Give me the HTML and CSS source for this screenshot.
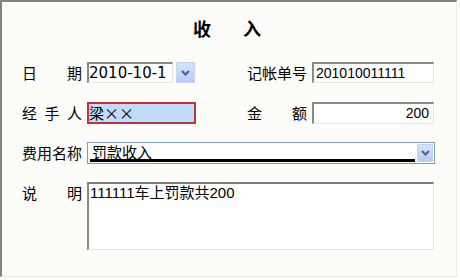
FILE: index.html
```html
<!DOCTYPE html>
<html lang="zh">
<head>
<meta charset="utf-8">
<title>收入</title>
<link rel="stylesheet" href="styles.css">
</head>
<body>
<div class="frame">
  <div class="title"><span>收</span><span>入</span></div>

  <div class="row row1">
    <div class="label"><span>日</span><span>期</span></div>
    <div class="field-left">
      <div class="box date">2010-10-1</div>
      <div class="dd-btn"><svg width="9" height="6" viewBox="0 0 9 6"><path d="M1 1 L4.5 4.5 L8 1" fill="none" stroke="#4a5f88" stroke-width="2"/></svg></div>
    </div>
    <div class="label right"><span>记</span><span>帐</span><span>单</span><span>号</span></div>
    <div class="box wide">201010011111</div>
  </div>

  <div class="row row2">
    <div class="label"><span>经</span><span>手</span><span>人</span></div>
    <div class="field-left">
      <div class="selected">梁××</div>
    </div>
    <div class="label right"><span>金</span><span>额</span></div>
    <div class="box wide num">200</div>
  </div>

  <div class="row row3">
    <div class="label"><span>费</span><span>用</span><span>名</span><span>称</span></div>
    <div class="combo">
      <div class="combo-text">罚款收入</div>
      <div class="dd-btn combo-btn"><svg width="9" height="6" viewBox="0 0 9 6"><path d="M1 1 L4.5 4.5 L8 1" fill="none" stroke="#4a5f88" stroke-width="2"/></svg></div>
    </div>
  </div>

  <div class="row row4">
    <div class="label"><span>说</span><span>明</span></div>
    <div class="memo">111111车上罚款共200</div>
  </div>
</div>
</body>
</html>
```

FILE: styles.css
```css
html, body {
  margin: 0;
  padding: 0;
  background: #fcfcf8;
}
body {
  font-family: "Noto Sans CJK SC", "Liberation Sans", sans-serif;
  font-size: 15px;
  color: #000;
}
.frame {
  box-sizing: border-box;
  width: 457px;
  height: 277px;
  border-top: 2px solid #85857e;
  border-left: 2px solid #85857e;
  border-right: 1px solid #ecebe5;
  border-bottom: 1px solid #ecebe5;
  background: #fcfcf8;
  padding-left: 20px;
}
.title {
  margin-top: 14px;
  height: 24px;
  display: flex;
  justify-content: center;
  gap: 32px;
  font-size: 18px;
  font-weight: bold;
  line-height: 24px;
  padding-right: 24px;
}
.row {
  display: flex;
  align-items: center;
}
.row1 { margin-top: 22px; height: 21px; }
.row2 { margin-top: 19px; height: 22px; }
.row3 { margin-top: 18px; height: 22px; }
.row4 { margin-top: 18px; height: 68px; align-items: flex-start; }
.label {
  width: 60px;
  display: flex;
  justify-content: space-between;
  margin-right: 5px;
  line-height: 20px;
  flex: none;
}
.row4 .label { margin-top: 1px; }
.label.right { margin-left: 51px; }
.field-left {
  width: 109px;
  height: 100%;
  display: flex;
  align-items: stretch;
  flex: none;
}
.box {
  box-sizing: border-box;
  height: 100%;
  background: #fff;
  border-top: 2px solid #8a8a84;
  border-left: 2px solid #8a8a84;
  border-right: 1px solid #e6e6e0;
  border-bottom: 1px solid #e6e6e0;
  font-family: "Liberation Sans", "Noto Sans CJK SC", sans-serif;
  font-size: 14px;
  line-height: 18px;
  padding-left: 1px;
  white-space: nowrap;
  overflow: hidden;
}
.date {
  width: 86px;
  font-family: "DejaVu Sans", "Liberation Sans", sans-serif;
  font-size: 15px;
  padding-left: 0;
}
.wide {
  width: 122px;
  padding-left: 2px;
}
.num {
  text-align: right;
  padding-right: 4px;
}
.dd-btn {
  box-sizing: border-box;
  width: 19px;
  margin-left: 3px;
  border: 1px solid #c6d4f2;
  background: linear-gradient(#d6e2fc, #b8cbf6);
  display: flex;
  align-items: center;
  justify-content: center;
}
.selected {
  box-sizing: border-box;
  width: 109px;
  height: 100%;
  border: 2px solid #c4303a;
  background: #c0dcf8;
  padding-left: 0;
  line-height: 18px;
  font-size: 15px;
  white-space: nowrap;
}
.combo {
  box-sizing: border-box;
  width: 348px;
  height: 100%;
  border: 1px solid #7f9db9;
  background: #fff;
  display: flex;
  align-items: stretch;
  padding: 1px;
}
.combo-text {
  flex: 1;
  border-bottom: 3px solid #000;
  margin-right: 2px;
  margin-left: 1px;
  line-height: 15px;
  font-size: 15px;
  padding-left: 2px;
}
.combo-btn {
  width: 16px;
  margin-left: 0;
}
.memo {
  box-sizing: border-box;
  width: 347px;
  height: 68px;
  background: #fff;
  border-top: 2px solid #7e7e78;
  border-left: 2px solid #8a8a84;
  border-right: 1px solid #e6e6e0;
  border-bottom: 1px solid #e6e6e0;
  font-family: "Liberation Sans", "Noto Sans CJK SC", sans-serif;
  font-size: 15px;
  line-height: 18px;
  padding-left: 1px;
}
```
